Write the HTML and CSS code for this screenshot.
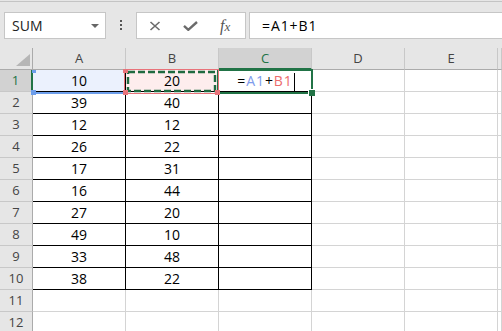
FILE: index.html
```html
<!DOCTYPE html>
<html lang="en">
<head>
  <meta charset="UTF-8">
  <title>Book1 - Excel</title>
  <link rel="stylesheet" href="styles.css">
</head>
<body>
  <div class="toolbar">
    <div class="namebox"><span>SUM</span><span class="caret"></span></div>
    <div class="dots"><i></i><i></i><i></i></div>
    <div class="fxbox">
      <svg class="ico-x" width="12" height="10" viewBox="0 0 12 10"><path d="M1.5 1 L10.5 9 M10.5 1 L1.5 9" /></svg>
      <svg class="ico-ok" width="15" height="10" viewBox="0 0 15 10"><path d="M1 4.8 L5.3 8.8 L14 1" /></svg>
      <span class="fx">f<i>x</i></span>
    </div>
    <div class="formula">=A1+B1</div>
  </div>

  <div class="sheet">
    <div class="corner"></div>
    <div class="ch">A</div><div class="ch">B</div><div class="ch sel">C</div><div class="ch">D</div><div class="ch">E</div><div class="ch"></div>

    <div class="rh sel">1</div><div class="c b a1">10</div><div class="c b b1">20</div>
    <div class="c b edit">=<span class="ref-a">A1</span>+<span class="ref-b">B1</span><span class="cursor"></span></div>
    <div class="c"></div><div class="c"></div><div class="c"></div>

    <div class="rh">2</div><div class="c b">39</div><div class="c b">40</div><div class="c b"></div><div class="c"></div><div class="c"></div><div class="c"></div>
    <div class="rh">3</div><div class="c b">12</div><div class="c b">12</div><div class="c b"></div><div class="c"></div><div class="c"></div><div class="c"></div>
    <div class="rh">4</div><div class="c b">26</div><div class="c b">22</div><div class="c b"></div><div class="c"></div><div class="c"></div><div class="c"></div>
    <div class="rh">5</div><div class="c b">17</div><div class="c b">31</div><div class="c b"></div><div class="c"></div><div class="c"></div><div class="c"></div>
    <div class="rh">6</div><div class="c b">16</div><div class="c b">44</div><div class="c b"></div><div class="c"></div><div class="c"></div><div class="c"></div>
    <div class="rh">7</div><div class="c b">27</div><div class="c b">20</div><div class="c b"></div><div class="c"></div><div class="c"></div><div class="c"></div>
    <div class="rh">8</div><div class="c b">49</div><div class="c b">10</div><div class="c b"></div><div class="c"></div><div class="c"></div><div class="c"></div>
    <div class="rh">9</div><div class="c b">33</div><div class="c b">48</div><div class="c b"></div><div class="c"></div><div class="c"></div><div class="c"></div>
    <div class="rh">10</div><div class="c b">38</div><div class="c b">22</div><div class="c b"></div><div class="c"></div><div class="c"></div><div class="c"></div>
    <div class="rh">11</div><div class="c"></div><div class="c"></div><div class="c"></div><div class="c"></div><div class="c"></div><div class="c"></div>
    <div class="rh">12</div><div class="c"></div><div class="c"></div><div class="c"></div><div class="c"></div><div class="c"></div><div class="c"></div>

    <!-- range finder and active cell, drawn over the grid -->
    <div class="range-blue"></div>
    <span class="hdl blue tl"></span>
    <span class="hdl blue bl"></span>

    <div class="active"><span class="fill-handle"></span></div>

    <div class="range-red">
      <svg width="95" height="25" viewBox="0 0 95 25"><rect x="4" y="3" width="87" height="19" /></svg>
    </div>
    <span class="hdl red tl"></span>
    <span class="hdl red bl"></span>
    <span class="hdl red br"></span>
  </div>
</body>
</html>
```

FILE: styles.css
```css
* {
  box-sizing: border-box;
}

html,
body {
  margin: 0;
  padding: 0;
}

body {
  width: 502px;
  height: 331px;
  overflow: hidden;
  background: #fff;
  font-family: 'Open Sans', 'Noto Sans', sans-serif;
  color: #000;
}

/* formula bar */
.toolbar {
  height: 48px;
  display: flex;
  align-items: flex-start;
  padding: 12px 0 0 4px;
  background: linear-gradient(#e6e6e6 1px, #c4c4c4 1px, #c4c4c4 2px, #e6e6e6 2px);
}

.namebox {
  width: 102px;
  height: 27px;
  display: flex;
  align-items: center;
  justify-content: space-between;
  padding: 0 6px 0 7px;
  background: #fff;
  border: 1px solid #c6c6c6;
  font-size: 14px;
  color: #222;
}

.caret {
  width: 0;
  height: 0;
  border-left: 4px solid transparent;
  border-right: 4px solid transparent;
  border-top: 4px solid #666;
}

.dots {
  width: 30px;
  display: flex;
  flex-direction: column;
  align-items: center;
  gap: 2px;
  padding-top: 8px;
}

.dots i {
  width: 2px;
  height: 2px;
  background: #555;
}

.fxbox {
  width: 110px;
  height: 27px;
  display: flex;
  align-items: center;
  gap: 22px;
  padding-left: 12px;
  background: #fff;
  border: 1px solid #c6c6c6;
}

.fxbox svg path {
  fill: none;
  stroke: #6b6b6b;
}

.ico-x path {
  stroke-width: 1.6;
}

.ico-ok path {
  stroke-width: 2.4;
}

.fx {
  font-family: 'Liberation Serif', serif;
  font-style: italic;
  font-size: 16px;
  color: #555;
  line-height: 1;
}

.fx i {
  font-size: 13px;
}

.formula {
  flex: 1;
  min-width: 0;
  height: 27px;
  margin-left: 3px;
  padding-left: 12px;
  background: #fff;
  border: 1px solid #c6c6c6;
  border-right: none;
  font-size: 14px;
  letter-spacing: 0.9px;
  line-height: 25px;
}

/* sheet grid */
.sheet {
  position: relative;
  display: grid;
  grid-template-columns: 33px repeat(5, 93px) minmax(0, 1fr);
  grid-template-rows: repeat(13, 22px);
  overflow: hidden;
}

.corner {
  position: relative;
  background: #e6e6e6;
  border-right: 1px solid #ababab;
  border-bottom: 1px solid #ababab;
}

.corner::after {
  content: '';
  position: absolute;
  right: 2px;
  bottom: 3px;
  border-left: 14px solid transparent;
  border-bottom: 12px solid #b6b6b6;
}

.ch {
  background: #e6e6e6;
  border-right: 1px solid #c8c8c8;
  border-bottom: 1px solid #ababab;
  font-size: 13px;
  color: #444;
  text-align: center;
  line-height: 21px;
}

.rh {
  background: #e6e6e6;
  border-right: 1px solid #ababab;
  border-bottom: 1px solid #c8c8c8;
  font-size: 13px;
  color: #444;
  text-align: center;
  line-height: 21px;
}

.ch.sel,
.rh.sel {
  background: #d2d2d2;
  color: #217346;
}

.ch.sel {
  border-bottom: 2px solid #217346;
}

.rh.sel {
  border-right: 2px solid #217346;
}

.c {
  border-right: 1px solid #d4d4d4;
  border-bottom: 1px solid #d4d4d4;
  font-size: 14px;
  text-align: center;
  line-height: 21px;
  white-space: nowrap;
}

.c.b {
  border-color: #000;
}

.a1 {
  background: #ebf1fd;
}

.b1 {
  background: #fdeded;
}

.edit {
  letter-spacing: 0.9px;
  padding-left: 2px;
}

.ref-a {
  color: #7f9cec;
}

.ref-b {
  color: #ec6c6c;
}

.cursor {
  display: inline-block;
  width: 1px;
  height: 19px;
  margin-left: 1px;
  vertical-align: middle;
  background: #000;
}

/* overlays */
.range-blue {
  position: absolute;
  left: 33px;
  top: 21px;
  width: 92px;
  height: 25px;
  border-bottom: 2px solid #6d9eeb;
}

.active {
  position: absolute;
  left: 217px;
  top: 21px;
  width: 96px;
  height: 25px;
  border: 2px solid #217346;
}

.fill-handle {
  position: absolute;
  right: -4px;
  bottom: -4px;
  width: 7px;
  height: 7px;
  background: #217346;
  border-left: 1px solid #fff;
  border-top: 1px solid #fff;
}

.range-red {
  position: absolute;
  left: 124px;
  top: 21px;
  width: 95px;
  height: 25px;
  border: 1px solid #e8737a;
}

.range-red svg {
  position: absolute;
  left: -1px;
  top: -1px;
}

.range-red rect {
  fill: none;
  stroke: #1f6b41;
  stroke-width: 2.4;
  stroke-dasharray: 7 3;
}

.hdl {
  position: absolute;
  width: 5px;
  height: 5px;
}

.hdl.blue {
  background: #6d9eeb;
}

.hdl.red {
  background: #e8737a;
}

.hdl.blue.tl {
  left: 32px;
  top: 22px;
  height: 3px;
  width: 4px;
}

.hdl.blue.bl {
  left: 31px;
  top: 42px;
}

.hdl.red.tl {
  left: 123px;
  top: 21px;
  height: 4px;
}

.hdl.red.bl {
  left: 123px;
  top: 42px;
}

.hdl.red.br {
  left: 215px;
  top: 42px;
}
```
